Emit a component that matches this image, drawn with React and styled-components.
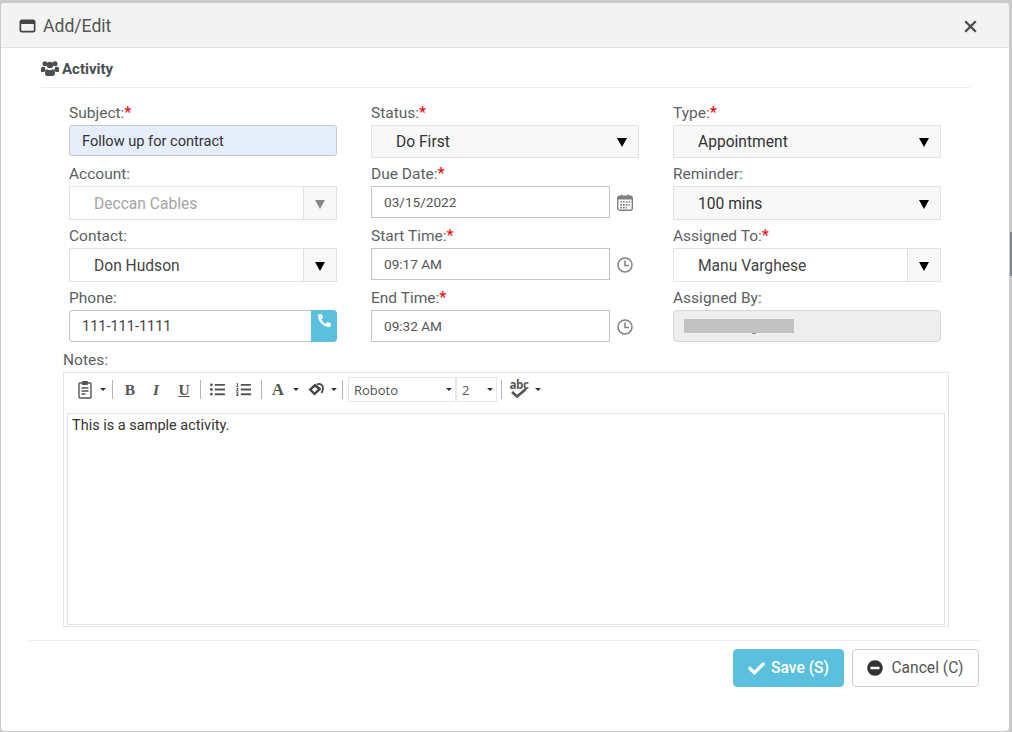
import React from "react";
import styled, { createGlobalStyle } from "styled-components";
import { FaPhone, FaCheck, FaMinusCircle, FaListUl, FaListOl } from "react-icons/fa";

const Global = createGlobalStyle`
  html, body { margin: 0; height: 100%; overflow: hidden; background: #cbcbcb; }
  #root { height: 100%; }
  * { box-sizing: border-box; }
`;
const Backdrop = styled.div`
  height: 732px; width: 1012px; padding: 3px 3px 1px 1px; position: relative;
  font-family: Roboto, "Liberation Sans", sans-serif; color: #555;
`;
const ScrollThumb = styled.div`
  position: absolute; right: 0; top: 232px; width: 2px; height: 44px; background: #7d878c;
`;
const Dialog = styled.div`
  height: 100%; background: #fff; border-radius: 4px; display: flex; flex-direction: column; overflow: hidden;
`;
const Header = styled.header`
  height: 45px; flex: none; background: #f3f3f3; border-bottom: 1px solid #e2e2e2;
  display: flex; align-items: center; justify-content: space-between; padding: 2px 32px 0 18px;
`;
const Title = styled.div`
  display: flex; align-items: center; gap: 7px; font-size: 17.6px; color: #555; line-height: 20px;
`;
const CloseButton = styled.span`
  display: flex;
`;
const Body = styled.div`
  flex: 1; padding: 0 28px; display: flex; flex-direction: column;
`;
const Section = styled.div`
  margin: 0 11px 0 12px; height: 40px; border-bottom: 1px solid #eee;
  display: flex; align-items: center; gap: 3px; font-size: 15px; font-weight: 700; color: #4a4f52; padding-top: 2px;
`;
const Grid = styled.div`
  display: grid; grid-template-columns: repeat(3, 268px); column-gap: 34px; padding: 17px 0 0 40px;
`;
const Field = styled.div`
  height: ${p => p.$h || 62}px; display: flex; flex-direction: column;
`;
const Label = styled.label`
  font-size: 15.5px; line-height: 16px; height: 20px; color: #5b5f62; display: block;
`;
const Star = styled.span`
  color: #f00; font-size: 16.5px;
`;
const BaseControl = styled.div`
  height: 32px; width: 100%; display: flex; align-items: center; font-size: 15.6px;
`;
const Subject = styled(BaseControl)`
  height: 31px; background: #e6edfb; border: 1px solid #c4c8cc; border-radius: 3px; padding-left: 12px; color: #333; font-size: 14.6px;
`;
const Select = styled(BaseControl)`
  height: ${p => p.$h || 33}px; background: #f8f8f8; border: 1px solid #e2e2e2; padding-left: 24px; color: #333; justify-content: space-between;
`;
const SelectText = styled.span`
  padding-top: ${p => p.$nudge || 0}px;
`;
const Combo = styled(BaseControl)`
  height: 34px; background: #fff; border: 1px solid #e2e2e2; padding-left: 24px; justify-content: space-between;
  color: ${p => (p.$disabled ? "#a5a5a5" : "#444")};
`;
const ComboButton = styled.span`
  width: 33px; height: 100%; flex: none; border-left: 1px solid #e2e2e2; background: #f8f8f8;
  display: flex; align-items: center; justify-content: center;
`;
const Caret = styled.span`
  width: 0; height: 0; border-left: 5px solid transparent; border-right: 5px solid transparent;
  border-top: 9px solid ${p => p.$color || "#000"}; margin-top: 2px;
  ${p => p.$end ? "margin-right: 11px;" : ""}
`;
const Joined = styled.div`
  display: flex; height: 32px;
`;
const PhoneInput = styled.div`
  flex: 1; border: 1px solid #c4c4c4; border-right: 0; border-radius: 4px 0 0 4px; font-size: 14.5px; color: #444;
  padding-left: 12px; display: flex; align-items: center;
`;
const PhoneButton = styled.span`
  width: 26px; background: #5bc0de; border-radius: 0 4px 4px 0; color: #fff; display: flex; justify-content: center; padding-top: 4px; font-size: 13px;
`;
const PickerRow = styled.div`
  display: flex; align-items: center; gap: 7px; height: 32px;
`;
const PickerInput = styled.div`
  width: 239px; height: 32px; border: 1px solid #c4c4c4; font-size: 13.6px; color: #555; display: flex; align-items: center; padding-left: 12px;
`;
const PickerIcon = styled.span`
  display: flex; margin-top: 1px;
`;
const ReadOnly = styled.div`
  height: 32px; background: #eee; border: 1px solid #d6d6d6; border-radius: 4px; padding: 8px 0 0 10px;
`;
const Redaction = styled.div`
  width: 110px; height: 14px; background: #c2c2c2; position: relative;
  &::after { content: ""; position: absolute; left: 68px; top: 14px; width: 4px; height: 1px; background: #8a8a8a; }
`;
const NotesBlock = styled.div`
  margin: -1px 32px 0 34px; display: flex; flex-direction: column;
`;
const NotesLabel = styled.label`
  font-size: 15.5px; line-height: 16px; color: #5b5f62; height: 21px; padding-top: 1px;
`;
const Editor = styled.div`
  height: 255px; border: 1px solid #e6e6e6; padding: 0 3px 1px; display: flex; flex-direction: column;
`;
const Toolbar = styled.div`
  height: 40px; flex: none; display: flex; align-items: center; padding: 0 0 7px 9px; color: #555;
`;
const Tool = styled.span`
  width: ${p => p.$w}px; display: flex; justify-content: center; align-items: center; height: 20px; color: #555;
`;
const SerifTool = styled(Tool)`
  font-family: "Liberation Serif", serif; font-weight: 700; font-size: 15.5px;
  font-style: ${p => (p.$italic ? "italic" : "normal")};
  text-decoration: ${p => (p.$under ? "underline" : "none")};
`;
const LetterTool = styled(Tool)`
  font-family: "Liberation Serif", serif; font-weight: 700; font-size: 17px;
`;
const SmallCaret = styled.span`
  width: 0; height: 0; border-left: 3px solid transparent; border-right: 3px solid transparent;
  border-top: 3.5px solid #333; margin: 0 ${p => p.$r ?? 0}px 0 ${p => p.$l ?? 0}px; flex: none;
`;
const Sep = styled.span`
  width: 1px; height: 19px; background: #b5b5b5; margin: 0 ${p => p.$r ?? 0}px 0 ${p => p.$l ?? 0}px; flex: none;
`;
const ToolSelect = styled.span`
  width: ${p => p.$w}px; height: 25px; flex: none; border: 1px solid #e6e6e6; display: flex; align-items: center; justify-content: space-between;
  padding: 0 3px 0 5px; font: 400 13px "Open Sans", sans-serif; color: #555; margin-left: ${p => p.$l ?? 0}px;
`;
const Spell = styled.span`
  display: flex; flex-direction: column; align-items: center; width: 22px; height: 22px;
  font: 700 11.5px/11px "Open Sans", sans-serif; color: #555; margin-left: 6px; letter-spacing: -0.3px;
`;
const SpellMark = styled.svg`
  margin-top: -2px;
`;
const EditArea = styled.div`
  flex: 1; border: 1px solid #e2e2e2; padding: 3px 4px; font-size: 14.5px; line-height: 18px; color: #333;
`;
const Footer = styled.footer`
  margin-top: 13px; border-top: 1px solid #eee; padding: 8px 2px 0 0; display: flex; justify-content: flex-end; gap: 8px;
`;
const Button = styled.button`
  height: 38px; border-radius: 4px; font: 400 15.6px Roboto, sans-serif; display: flex; align-items: center; justify-content: center;
  width: ${p => p.$w}px; padding: 0;
`;
const SaveButton = styled(Button)`
  background: #5bc0de; border: 1px solid #5bc0de; color: #fff; gap: 6px; font-weight: 500;
`;
const CancelButton = styled(Button)`
  background: #fff; border: 1px solid #ccc; color: #555; gap: 8px;
`;
const Req = () => <Star>*</Star>;

const WindowIcon = () => (
  <svg width="17" height="14" viewBox="0 0 17 14"><path fill="#444" fillRule="evenodd" d="M3 0.5h11a2.5 2.5 0 0 1 2.5 2.5v8a2.5 2.5 0 0 1-2.5 2.5H3A2.5 2.5 0 0 1 .5 11V3A2.5 2.5 0 0 1 3 .5zM2.2 5v6a.8.8 0 0 0 .8.8h11a.8.8 0 0 0 .8-.8V5z"/></svg>
);
const UsersIcon = () => (
  <svg width="18" height="15" viewBox="0 0 18 15" fill="#4a4f52"><circle cx="4" cy="2.800" r="2.500"/><circle cx="14" cy="2.800" r="2.500"/><circle cx="9" cy="4" r="3.300"/><path d="M0 10V7.500C0 6.300 1 5.800 2.200 5.800c1 0 1.600.3 2 .6-.3 1.200 0 2 1 3-1 .5-1.500 1-1.800 1.600H1c-.6 0-1-.4-1-1zM18 10V7.500c0-1.200-1-1.700-2.200-1.700-1 0-1.600.3-2 .6.300 1.200 0 2-1 3 1 .5 1.500 1 1.800 1.600H17c.6 0 1-.4 1-1z"/><path d="M4 12.500C4 10 5 8.300 6.500 8.300c.8.600 1.600.9 2.500.9s1.700-.3 2.500-.9c1.500 0 2.500 1.700 2.500 4.200 0 1.500-1 2.500-2.300 2.500H6.300C5 15 4 14 4 12.500z"/></svg>
);
const CloseIcon = () => (
  <svg width="13" height="13" viewBox="0 0 13 13"><path stroke="#4a4a4a" strokeWidth="2.300" d="M1.200 1.200 11.800 11.800M11.800 1.200 1.200 11.800"/></svg>
);
const CalendarIcon = () => (
  <svg width="16" height="17" viewBox="0 0 16 17"><rect x=".7" y="2.200" width="14.600" height="14" rx="2" fill="none" stroke="#808080" strokeWidth="1.400"/><path fill="#808080" d="M1 2.500h14V5.500H1zM4 .5h1.500v3H4zM10.500.5H12v3h-1.500z"/><path stroke="#808080" strokeWidth="1.700" strokeDasharray="1.700 1.100" d="M3.200 8h9.600M3.200 10.800h9.600M3.200 13.600h6.800"/></svg>
);
const ClockIcon = () => (
  <svg width="16" height="16" viewBox="0 0 16 16"><circle cx="8" cy="8" r="7" fill="none" stroke="#808080" strokeWidth="1.500"/><path fill="none" stroke="#808080" strokeWidth="1.500" d="M8 3.500V8.500H12"/></svg>
);
const ClipboardIcon = () => (
  <svg width="14" height="19" viewBox="0 0 14 19"><path fill="none" stroke="#555" strokeWidth="1.400" d="M4 3H2a1 1 0 0 0-1 1v13a1 1 0 0 0 1 1h10a1 1 0 0 0 1-1V4a1 1 0 0 0-1-1h-2"/><rect x="4" y="1" width="6" height="4" rx="1" fill="#555"/><path stroke="#555" strokeWidth="1.400" d="M3.500 8h7M3.500 11h7M3.500 14h4"/></svg>
);
const FillIcon = () => (
  <svg width="17" height="13" viewBox="0 0 17 13"><path fill="#444" fillRule="evenodd" d="M7 .5.500 6.500 6.500 12.500 13.500 6zM7 4 9.800 6.300 6.500 9.200 3.800 6.500z"/><path fill="none" stroke="#444" strokeWidth="1.800" d="M9 1.500c3-1.500 6 .5 6 3.500 0 2-.6 3.500-1.500 5"/></svg>
);

export default function App() {
  return (
    <Backdrop>
      <Global />
      <ScrollThumb />
      <Dialog>
        <Header>
          <Title><WindowIcon />Add/Edit</Title>
          <CloseButton><CloseIcon /></CloseButton>
        </Header>
        <Body>
          <Section><UsersIcon />Activity</Section>
          <Grid>
            <Field $h={61}><Label>Subject:<Req /></Label><Subject>Follow up for contract</Subject></Field>
            <Field $h={61}><Label>Status:<Req /></Label><Select>Do First<Caret $end /></Select></Field>
            <Field $h={61}><Label>Type:<Req /></Label><Select>Appointment<Caret $end /></Select></Field>

            <Field><Label>Account:</Label><Combo $disabled><SelectText $nudge={2}>Deccan Cables</SelectText><ComboButton><Caret $color="#888" /></ComboButton></Combo></Field>
            <Field><Label>Due Date:<Req /></Label><PickerRow><PickerInput>03/15/2022</PickerInput><PickerIcon><CalendarIcon /></PickerIcon></PickerRow></Field>
            <Field><Label>Reminder:</Label><Select $h={34}><SelectText $nudge={2}>100 mins</SelectText><Caret $end /></Select></Field>

            <Field><Label>Contact:</Label><Combo><SelectText $nudge={2}>Don Hudson</SelectText><ComboButton><Caret /></ComboButton></Combo></Field>
            <Field><Label>Start Time:<Req /></Label><PickerRow><PickerInput>09:17 AM</PickerInput><PickerIcon><ClockIcon /></PickerIcon></PickerRow></Field>
            <Field><Label>Assigned To:<Req /></Label><Combo><SelectText $nudge={2}>Manu Varghese</SelectText><ComboButton><Caret /></ComboButton></Combo></Field>

            <Field><Label>Phone:</Label><Joined><PhoneInput>111-111-1111</PhoneInput><PhoneButton><FaPhone style={{ transform: "scaleX(-1)" }} /></PhoneButton></Joined></Field>
            <Field><Label>End Time:<Req /></Label><PickerRow><PickerInput>09:32 AM</PickerInput><PickerIcon><ClockIcon /></PickerIcon></PickerRow></Field>
            <Field><Label>Assigned By:</Label><ReadOnly><Redaction /></ReadOnly></Field>
          </Grid>
          <NotesBlock>
            <NotesLabel>Notes:</NotesLabel>
            <Editor>
              <Toolbar>
                <Tool $w={18}><ClipboardIcon /></Tool>
                <SmallCaret $l={6} $r={6} />
                <Sep $r={6} />
                <SerifTool $w={22}>B</SerifTool>
                <SerifTool $w={30} $italic>I</SerifTool>
                <SerifTool $w={26} $under>U</SerifTool>
                <Sep $l={3} $r={4} />
                <Tool $w={24}><FaListUl size={15} /></Tool>
                <Tool $w={28}><FaListOl size={15} /></Tool>
                <Sep $l={4} $r={5} />
                <LetterTool $w={22}>A</LetterTool>
                <SmallCaret $l={4} $r={5} />
                <Tool $w={24}><FillIcon /></Tool>
                <SmallCaret $l={3} $r={5} />
                <Sep $r={3} />
                <ToolSelect $w={108} $l={2}>Roboto<SmallCaret /></ToolSelect>
                <ToolSelect $w={41} $l={0}>2<SmallCaret /></ToolSelect>
                <Sep $l={4} />
                <Spell>abc<SpellMark width="18" height="10" viewBox="0 0 18 10"><path fill="none" stroke="#555" strokeWidth="2.600" d="M2 4l5 4.500L16 1"/></SpellMark></Spell>
                <SmallCaret $l={5} />
              </Toolbar>
              <EditArea>This is a sample activity.</EditArea>
            </Editor>
          </NotesBlock>
          <Footer>
            <SaveButton $w={111}><FaCheck size={17} />Save (S)</SaveButton>
            <CancelButton $w={127}><FaMinusCircle size={16} color="#333" />Cancel (C)</CancelButton>
          </Footer>
        </Body>
      </Dialog>
    </Backdrop>
  );
}
